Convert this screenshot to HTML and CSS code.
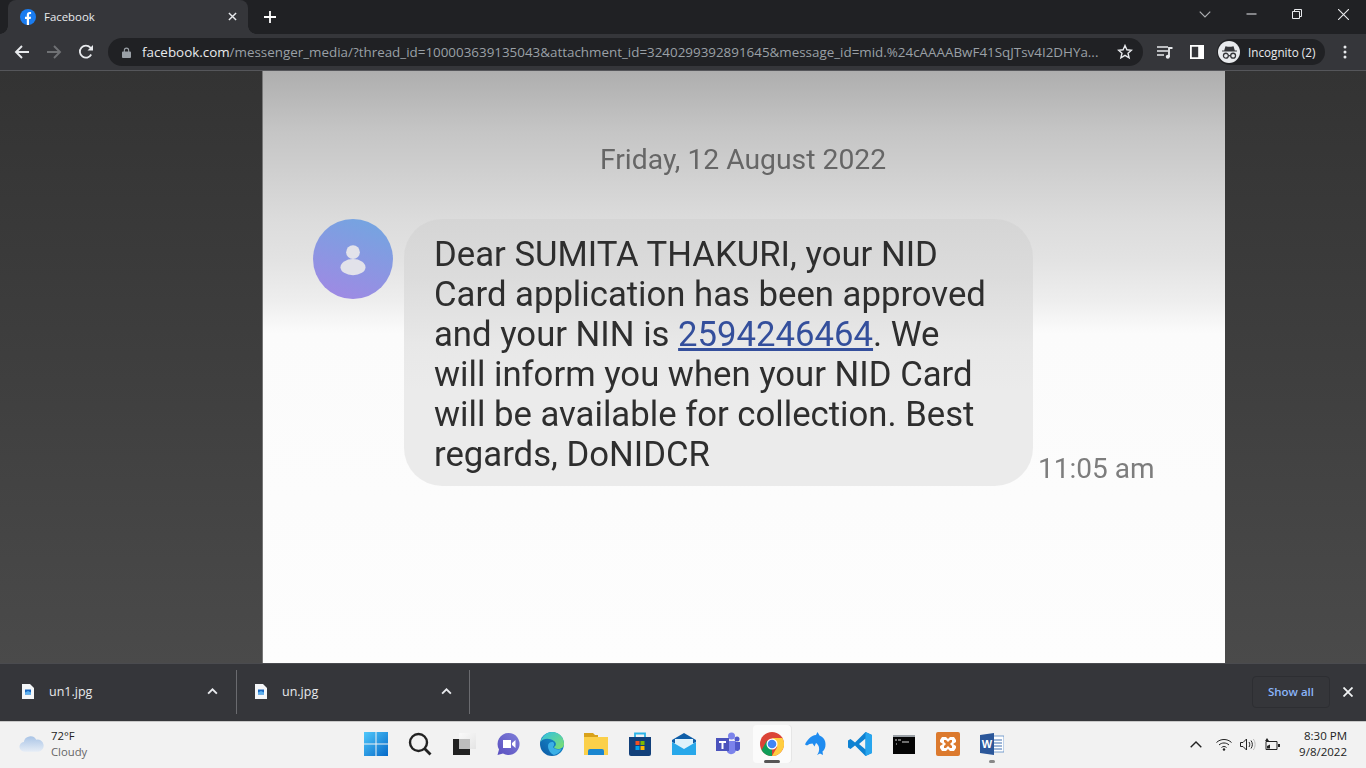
FILE: index.html
```html
<!DOCTYPE html>
<html lang="en">
<head>
<meta charset="utf-8">
<title>Facebook</title>
<link rel="stylesheet" href="styles.css">
</head>
<body>
<div class="browser">
  <header class="tabstrip">
    <div class="tab">
      <svg class="favicon" viewBox="0 0 16 16"><circle cx="8" cy="8" r="8" fill="#1a7cf0"/><path d="M6.8 16V10H5V7.7h1.8V6c0-1.9 1.1-2.9 2.8-2.9.8 0 1.500.1 1.500.1v1.900h-.9c-.9 0-1.200.6-1.200 1.100v1.500h2l-.3 2.300H9v6z" fill="#fff"/></svg>
      <span class="tab-title">Facebook</span>
      <svg class="tab-close" viewBox="0 0 10 10"><path d="M1 1l8 8M9 1l-8 8" stroke="#e8eaed" stroke-width="1.600" fill="none"/></svg>
    </div>
    <svg class="new-tab" viewBox="0 0 12 12"><path d="M6 0v12M0 6h12" stroke="#fff" stroke-width="1.800" fill="none"/></svg>
    <div class="win-controls">
      <svg class="win-chev" viewBox="0 0 10 6"><path d="M.5.5L5 5 9.500.5" stroke="#aeb0b3" fill="none"/></svg>
      <svg class="win-min" viewBox="0 0 10 10"><path d="M0 5h10" stroke="#e8eaed" fill="none"/></svg>
      <svg class="win-max" viewBox="0 0 10 10"><path d="M.5 2.500h7v7h-7zM2.500 2.500v-2h7v7h-2" stroke="#e8eaed" fill="none"/></svg>
      <svg class="win-close" viewBox="0 0 10 10"><path d="M0 0l10 10M10 0L0 10" stroke="#e8eaed" fill="none"/></svg>
    </div>
  </header>
  <nav class="toolbar">
    <svg class="nav-icon" viewBox="0 0 16 16"><path d="M15 8H2M8 2L2 8l6 6" stroke="#e8eaed" stroke-width="1.900" fill="none"/></svg>
    <svg class="nav-icon" viewBox="0 0 16 16"><path d="M1 8h13M8 2l6 6-6 6" stroke="#6f7174" stroke-width="1.900" fill="none"/></svg>
    <svg class="nav-icon" viewBox="0 0 16 16"><path d="M13.200 10.500A6 6 0 1 1 12.400 3.700L14 5.300" stroke="#e8eaed" stroke-width="1.800" fill="none"/><path d="M15 1v5.500H9.500z" fill="#e8eaed"/></svg>
    <div class="omnibox">
      <svg class="lock" viewBox="0 0 10 12"><path d="M2 5V3.500a3 3 0 0 1 6 0V5h1a1 1 0 0 1 1 1v5a1 1 0 0 1-1 1H1a1 1 0 0 1-1-1V6a1 1 0 0 1 1-1zm1.200 0h3.600V3.500a1.800 1.800 0 0 0-3.600 0z" fill="#9aa0a6"/></svg>
      <span class="url"><span class="host">facebook.com</span>/messenger_media/?thread_id=100003639135043&amp;attachment_id=3240299392891645&amp;message_id=mid.%24cAAAABwF41SqJTsv4I2DHYa...</span>
      <svg class="star" viewBox="0 0 16 16"><path d="M8 1.500l1.900 4.300 4.600.4-3.500 3 1.100 4.600L8 11.300l-4.100 2.500L5 9.200l-3.500-3 4.600-.4z" stroke="#e8eaed" stroke-width="1.400" fill="none"/></svg>
    </div>
    <svg class="media" viewBox="0 0 16 14"><path d="M0 2h11M0 6h11M0 10h7" stroke="#e8eaed" stroke-width="1.600" fill="none"/><path d="M12 12V3h3.500" stroke="#e8eaed" stroke-width="1.800" fill="none"/><circle cx="10.800" cy="11.800" r="2" fill="#e8eaed"/></svg>
    <svg class="sidepanel" viewBox="0 0 14 14"><path d="M0 0h14v14H0zM1.800 1.800v10.400h6.400V1.800z" fill="#fff" fill-rule="evenodd"/></svg>
    <div class="incognito">
      <span class="inc-badge"><svg viewBox="0 0 16 14"><path d="M4.200 1L3 5H1v1h14V5h-2l-1.200-4-2.300.7h-3z" fill="#35363a"/><circle cx="4.600" cy="10" r="2.300" stroke="#35363a" stroke-width="1.200" fill="none"/><circle cx="11.400" cy="10" r="2.300" stroke="#35363a" stroke-width="1.200" fill="none"/><path d="M6.900 10h2.200" stroke="#35363a" stroke-width="1.200"/></svg></span>
      <span class="inc-label">Incognito (2)</span>
    </div>
    <svg class="kebab" viewBox="0 0 4 14"><circle cx="2" cy="2" r="1.500" fill="#e8eaed"/><circle cx="2" cy="7" r="1.500" fill="#e8eaed"/><circle cx="2" cy="12" r="1.500" fill="#e8eaed"/></svg>
  </nav>
  <main class="viewer">
    <div class="photo">
      <p class="date">Friday, 12 August 2022</p>
      <div class="message">
        <div class="avatar"><svg viewBox="0 0 32 32"><circle cx="16" cy="10.500" r="5.500" fill="#e2e2ea"/><ellipse cx="16" cy="22.500" rx="10" ry="6.500" fill="#e2e2ea"/></svg></div>
        <div class="bubble">Dear SUMITA THAKURI, your NID<br>Card application has been approved<br>and your NIN is <a class="num">2594246464</a>. We<br>will inform you when your NID Card<br>will be available for collection. Best<br>regards, DoNIDCR</div>
        <span class="time">11:05 am</span>
      </div>
    </div>
  </main>
  <section class="downloads">
    <div class="dl-item">
      <svg class="dl-file" viewBox="0 0 12 15"><path d="M0 0h8l4 4v11H0z" fill="#f4f6f8"/><path d="M3 5.500h6v5H3z" fill="#1967c0"/><path d="M3 8.500l3-1.500 3 1.500v2H3z" fill="#5cb0ee"/></svg>
      <span class="dl-name">un1.jpg</span>
      <svg class="dl-chev" viewBox="0 0 10 6"><path d="M1 5l4-4 4 4" stroke="#e8eaed" stroke-width="1.700" fill="none"/></svg>
    </div>
    <div class="dl-item">
      <svg class="dl-file" viewBox="0 0 12 15"><path d="M0 0h8l4 4v11H0z" fill="#f4f6f8"/><path d="M3 5.500h6v5H3z" fill="#1967c0"/><path d="M3 8.500l3-1.500 3 1.500v2H3z" fill="#5cb0ee"/></svg>
      <span class="dl-name">un.jpg</span>
      <svg class="dl-chev" viewBox="0 0 10 6"><path d="M1 5l4-4 4 4" stroke="#e8eaed" stroke-width="1.700" fill="none"/></svg>
    </div>
    <div class="dl-actions">
      <button class="show-all">Show all</button>
      <svg class="dl-close" viewBox="0 0 10 10"><path d="M.5.500l9 9M9.500.500l-9 9" stroke="#f1f3f4" stroke-width="1.800" fill="none"/></svg>
    </div>
  </section>
</div>
<footer class="taskbar">
  <div class="weather">
    <svg class="cloud" viewBox="0 0 26 18"><defs><linearGradient id="cl" x1="0" y1="0" x2="0" y2="1"><stop offset="0" stop-color="#a9c4e6"/><stop offset="1" stop-color="#e6edf6"/></linearGradient></defs><path d="M6 17a5 5 0 0 1-1-10 7 7 0 0 1 13-2.500A6 6 0 0 1 20.500 17z" fill="url(#cl)"/></svg>
    <div class="weather-text"><span class="temp">72°F</span><span class="cond">Cloudy</span></div>
  </div>
  <div class="apps">
    <span class="app"><svg viewBox="0 0 24 24"><defs><linearGradient id="w" x1="0" y1="0" x2="1" y2="1"><stop offset="0" stop-color="#50c8fb"/><stop offset="1" stop-color="#0669c8"/></linearGradient></defs><path d="M0 0h11.500v11.500H0zM12.500 0H24v11.500H12.500zM0 12.500h11.500V24H0zM12.500 12.500H24V24H12.500z" fill="url(#w)"/></svg></span>
    <span class="app"><svg viewBox="0 0 24 24"><circle cx="10.500" cy="10.500" r="8.500" stroke="#222" stroke-width="2.400" fill="none"/><path d="M16.500 16.500l6 6" stroke="#222" stroke-width="2.800"/></svg></span>
    <span class="app"><svg viewBox="0 0 24 24"><defs><linearGradient id="tv" x1="0" y1="0" x2="1" y2="1"><stop offset="0" stop-color="#fafafa"/><stop offset="1" stop-color="#e4e4e4"/></linearGradient></defs><path d="M1 7h17v16H1z" fill="#222"/><path d="M7 1h17v16H7z" fill="url(#tv)"/><path d="M7 7h11v10H7z" fill="#bdbdbd"/></svg></span>
    <span class="app"><svg viewBox="0 0 24 24"><defs><linearGradient id="ch" x1="1" y1="0" x2="0" y2="1"><stop offset="0" stop-color="#7f7fd8"/><stop offset="1" stop-color="#5a4fc0"/></linearGradient></defs><path d="M12.500 1a11 11 0 1 1-5.500 20.500L1.500 23l1.500-5.500A11 11 0 0 1 12.500 1z" fill="url(#ch)"/><path d="M7 8h8v8H7zM16 11l3.500-3v8L16 13z" fill="#fff"/></svg></span>
    <span class="app"><svg viewBox="0 0 24 24"><defs><linearGradient id="e1" x1="0" y1="1" x2="1" y2="0"><stop offset="0" stop-color="#0c59a4"/><stop offset="1" stop-color="#1a9ad6"/></linearGradient><linearGradient id="e2" x1="0" y1="0" x2="1" y2="1"><stop offset="0" stop-color="#2fc0e8"/><stop offset="1" stop-color="#7fe06a"/></linearGradient></defs><circle cx="12" cy="12" r="12" fill="url(#e1)"/><path d="M.5 10C2 4 7 0 12 0c7 0 12 5 12 12 0 3-3 5-6 5-2 0-4-1-4-2 2-1 3-4 0-6C10 6 3 6 .5 10z" fill="url(#e2)"/><path d="M8 14c0-3 2.500-4.500 5-4 1.500 1 1.500 3.500 0 5 1 2 5 3 8.500 2-1.500 3-4.500 5.500-7.500 6-3-1-6-5-6-9z" fill="#3bb0e6"/></svg></span>
    <span class="app"><svg viewBox="0 0 24 24"><path d="M0 1h9l2 2h3v4H0z" fill="#d9a21b"/><path d="M0 5h24v18H0z" fill="#fbd04a"/><path d="M4 19a2 2 0 0 1 2-2h12a2 2 0 0 1 2 2v4H4z" fill="#1a86d0"/></svg></span>
    <span class="app"><svg viewBox="0 0 24 24"><path d="M7 5V1.500h10V5" stroke="#2ab4e8" stroke-width="1.800" fill="none"/><path d="M1 5h22v17a2 2 0 0 1-2 2H3a2 2 0 0 1-2-2z" fill="#12407a"/><path d="M7.500 9h4v4h-4z" fill="#f25022"/><path d="M12.500 9h4v4h-4z" fill="#7fba00"/><path d="M7.500 14h4v4h-4z" fill="#00a4ef"/><path d="M12.500 14h4v4h-4z" fill="#ffb900"/></svg></span>
    <span class="app"><svg viewBox="0 0 24 24"><path d="M0 8l12-7 12 7v2L12 16 0 10z" fill="#0f5ea8"/><path d="M3 7h18v6l-9 5-9-5z" fill="#dff2fb"/><path d="M0 10l12 7 12-7v13H0z" fill="#28a8ea"/></svg></span>
    <span class="app"><svg viewBox="0 0 24 24"><circle cx="15.500" cy="4" r="3.500" fill="#7b83eb"/><circle cx="21" cy="7" r="2.500" fill="#5059c9"/><path d="M11 9h9v9a5 5 0 0 1-9 2z" fill="#7b83eb"/><path d="M19 10h5v7a3 3 0 0 1-5 1z" fill="#5059c9"/><path d="M0 6h13v13H0z" fill="#4b53bc"/><path d="M3 9h7v2H7.500v6h-2v-6H3z" fill="#fff"/></svg></span>
    <span class="app app-active"><svg viewBox="0 0 24 24"><circle cx="12" cy="12" r="12" fill="#db4437"/><path d="M12 24a12 12 0 0 1-10.400-6L7 8.500 12 17z" fill="#0f9d58"/><path d="M12 6h10.400a12 12 0 0 1-10.400 18l5.200-9z" fill="#ffcd40"/><circle cx="12" cy="12" r="5.500" fill="#fff"/><circle cx="12" cy="12" r="4.300" fill="#4285f4"/></svg></span>
    <span class="app"><svg viewBox="0 0 24 24"><path d="M1 12.500C3 8 7 3.500 12 3l1.500-3 2 3.500c4 1.500 6 5 6 9 0 3-1 5.500-3 7l.5 3.500-3-1.500-3 1.500c1.500-2 2.500-4.500 2-7.500-.3-2-1.500-3.500-3-4.500l-1.500 3.500-2-3-3 .5-2.500 1.500z" fill="#1f8cf0"/></svg></span>
    <span class="app"><svg viewBox="0 0 24 24"><path d="M17.500 0L24 3v18l-6.500 3L7 13.500l-4.500 3.500L0 15.500V8.500L2.500 7 7 10.500zM17.500 6.500L11 12l6.500 5.500z" fill="#0f82d2" fill-rule="evenodd"/><path d="M17.500 0L24 3v18l-6.500 3z" fill="#27a5ee"/></svg></span>
    <span class="app"><svg viewBox="0 0 24 24"><path d="M1 3h22v19H1z" fill="#050505"/><path d="M1 3h22v2H1z" fill="#9aa0a6"/><path d="M3 8h2M6 8h3M4 12h1M10 10h7" stroke="#d8d8d8" stroke-width="1.100" fill="none"/></svg></span>
    <span class="app"><svg viewBox="0 0 24 24"><rect width="24" height="24" rx="2" fill="#dc7a2e"/><path d="M6 5h4l2 2 2-2h4l2 3v2l-3 2 3 2v2l-2 3h-4l-2-2-2 2H6l-2-3v-2l3-2-3-2V8zM8 8v2l2 2-2 2v2h2l2-2 2 2h2v-2l-2-2 2-2V8h-2l-2 2-2-2z" fill="#fff" fill-rule="evenodd"/></svg></span>
    <span class="app app-open"><svg viewBox="0 0 24 24"><path d="M10 4h14v16H10z" fill="#fff" stroke="#5a8ac4" stroke-width=".8"/><path d="M14 8h8M14 11h8M14 14h8M14 17h8" stroke="#3f6fb0" stroke-width="1"/><path d="M0 3l14-2v22L0 21z" fill="#2b579a"/><text class="word-w" x="7" y="15.500">W</text></svg></span>
  </div>
  <div class="tray">
    <svg class="tray-chev" viewBox="0 0 12 7"><path d="M.7 6.300L6 1l5.300 5.300" stroke="#222" stroke-width="1.400" fill="none"/></svg>
    <svg class="tray-ic wifi" viewBox="0 0 16 13"><path d="M.5 4.500c4-4 11-4 15 0M3 7c2.700-2.700 7.300-2.700 10 0M5.500 9.500c1.300-1.300 3.700-1.300 5 0" stroke="#222" fill="none"/><circle cx="8" cy="11.500" r="1.200" fill="#222"/></svg>
    <svg class="tray-ic vol" viewBox="0 0 16 13"><path d="M.5 4.500h2.500L6.500 1v11L3 8.500H.5zM9 4c1 1.500 1 3.500 0 5M11 2.500c1.800 2.500 1.800 5.500 0 8" stroke="#222" fill="none"/><path d="M13.300 1c2.400 3.300 2.400 7.700 0 11" stroke="#bbb" fill="none"/></svg>
    <svg class="tray-ic batt" viewBox="0 0 17 13"><path d="M2 3.500h11v8H2z" stroke="#222" fill="none"/><path d="M14 6h2v3h-2z" fill="#222"/><path d="M3 10.500V8l3-1.500v4z" fill="#222"/><path d="M3 0L1 3h4z" fill="#222"/></svg>
    <div class="clock"><span>8:30 PM</span><span>9/8/2022</span></div>
  </div>
</footer>
</body>
</html>
```

FILE: styles.css
```css
* { box-sizing: border-box; }
html, body { margin: 0; height: 100%; overflow: hidden; }
body { display: flex; flex-direction: column; width: 1366px; height: 768px; font-family: "Open Sans", "Noto Sans", sans-serif; background: #f2f2f2; }
svg { display: block; flex: none; }

.browser { flex: 1; display: flex; flex-direction: column; min-height: 0; }

.tabstrip { height: 34px; background: #202124; display: flex; align-items: flex-end; padding-left: 8px; flex: none; }
.tab { position: relative; width: 240px; height: 34px; background: #35363a; border-radius: 8px 8px 0 0; display: flex; align-items: center; padding: 0 12px 1px; }
.tab::before, .tab::after { content: ""; position: absolute; bottom: 0; width: 8px; height: 8px; }
.tab::before { left: -8px; background: radial-gradient(circle at 0 0, #202124 7.500px, #35363a 8px); }
.tab::after { right: -8px; background: radial-gradient(circle at 100% 0, #202124 7.500px, #35363a 8px); }
.favicon { width: 16px; height: 16px; }
.tab-title { margin-left: 8px; flex: 1; color: #e8eaed; font: 11.400px "Open Sans", sans-serif; }
.tab-close { width: 9px; height: 9px; margin-right: -1px; }
.new-tab { width: 12px; height: 12px; margin: 0 0 11px 16px; }
.win-controls { margin-left: auto; align-self: flex-start; display: flex; align-items: center; height: 28px; }
.win-chev { width: 12px; height: 7px; margin-right: 35px; }
.win-min { width: 11px; height: 10px; margin-right: 35px; }
.win-max { width: 10px; height: 10px; margin-right: 36px; }
.win-close { width: 11px; height: 11px; margin-right: 17px; }

.toolbar { height: 37px; background: #35363a; border-bottom: 1px solid #55565a; display: flex; align-items: center; padding-left: 14px; flex: none; }
.nav-icon { width: 16px; height: 16px; margin-right: 16px; }
.omnibox { margin-left: -2px; width: 1035px; height: 28px; background: #202124; border-radius: 14px; display: flex; align-items: center; padding: 0 10px 0 14px; }
.lock { width: 9px; height: 11px; }
.url { margin-left: 11px; flex: 1; min-width: 0; white-space: nowrap; overflow: hidden; color: #9aa0a6; font: 13.400px "Open Sans", sans-serif; }
.host { color: #e8eaed; }
.star { width: 16px; height: 16px; }
.media { width: 16px; height: 14px; margin-left: 14px; }
.sidepanel { width: 14px; height: 14px; margin-left: 17px; }
.incognito { margin-left: 13px; height: 26px; width: 108px; border-radius: 13px; background: #202124; display: flex; align-items: center; padding-left: 1px; }
.inc-badge { width: 22px; height: 22px; border-radius: 50%; background: #e8eaed; display: flex; align-items: center; justify-content: center; }
.inc-badge svg { width: 17px; height: 15px; }
.inc-label { margin-left: 8px; color: #e8eaed; font: 11.700px "Open Sans", sans-serif; }
.kebab { width: 4px; height: 14px; margin-left: 18px; }

.viewer { flex: 1; min-height: 0; background: linear-gradient(#333, #4a4a4a); display: flex; padding-left: 263px; overflow: hidden; }
.photo { width: 962px; background: linear-gradient(#aeaeae 0, #c5c5c5 60px, #dcdcdc 150px, #e3e3e3 190px, #eeeeee 230px, #fbfbfb 262px, #fdfdfd 100%); box-shadow: -1px 0 0 #777; padding: 71px 0 0 50px; }
.date { margin: 0 0 41px 287px; height: 36px; color: #666; font: 28.300px/36px Roboto, sans-serif; filter: blur(.4px); }
.message { display: flex; align-items: flex-end; }
.avatar { width: 80px; height: 80px; border-radius: 50%; align-self: flex-start; background: linear-gradient(20deg, #a387e4, #70a7e0); display: flex; align-items: center; justify-content: center; filter: blur(.5px); }
.avatar svg { width: 40px; height: 40px; }
.bubble { margin-left: 11px; width: 629px; height: 267px; border-radius: 38px; background: linear-gradient(#d5d5d5 0, #dcdcdc 60px, #e8e8e8 125px, #ebebeb 170px); padding: 15px 30px; color: #2e2e2e; font: 34.700px/40px Roboto, sans-serif; white-space: nowrap; filter: blur(.35px); }
.num { color: #344f9c; text-decoration: underline; }
.time { margin: 0 0 -1px 5px; color: #7d7d7d; font: 28px/36px Roboto, sans-serif; filter: blur(.4px); }

.downloads { height: 58px; background: #35363a; border-top: 1px solid #4a4b4f; padding-bottom: 2px; display: flex; align-items: center; flex: none; }
.dl-item { width: 237px; height: 44px; border-right: 1px solid #6a6b6f; display: flex; align-items: center; padding: 0 18px 0 22px; }
.dl-item + .dl-item { width: 233px; padding-left: 18px; padding-right: 17.500px; }
.dl-file { width: 12px; height: 15px; }
.dl-name { margin-left: 15px; flex: 1; color: #e8eaed; font: 12.500px "Open Sans", sans-serif; }
.dl-chev { width: 11px; height: 7px; }
.dl-actions { margin-left: auto; display: flex; align-items: center; }
.show-all { width: 78px; height: 32px; border: 1px solid #2d2e32; border-radius: 4px; background: #35363a; color: #8ab4f8; font: 600 11.500px "Open Sans", sans-serif; padding: 0; }
.dl-close { width: 10px; height: 10px; margin: 0 13px; }

.taskbar { height: 47px; flex: none; background: #f2f2f2; border-top: 1px solid #c9c9c9; padding-bottom: 2px; display: flex; align-items: center; }
.weather { display: flex; align-items: center; width: 354px; padding-left: 19px; }
.cloud { width: 25px; height: 18px; }
.weather-text { margin-left: 7px; display: flex; flex-direction: column; font: 11.300px/16px "Open Sans", sans-serif; color: #222; }
.cond { color: #666; }
.apps { display: flex; align-items: center; }
.app { width: 44px; height: 44px; display: flex; align-items: center; justify-content: center; position: relative; }
.app svg { width: 24px; height: 24px; }
.app-active::before { content: ""; position: absolute; left: 3px; top: 3px; width: 38px; height: 38px; border-radius: 4px; background: #fbfbfb; box-shadow: 1px 0 0 #e6e6e6; }
.app-active svg { position: relative; }
.app-active::after { content: ""; position: absolute; left: 14px; bottom: 3px; width: 16px; height: 3px; border-radius: 2px; background: #555; }
.app-open::after { content: ""; position: absolute; left: 19px; bottom: 3px; width: 6px; height: 3px; border-radius: 2px; background: #888; }
.word-w { fill: #fff; font: 700 11px "Liberation Sans", sans-serif; text-anchor: middle; }
.tray { margin-left: auto; display: flex; align-items: center; padding-right: 19px; }
.tray-chev { width: 12px; height: 7px; margin-right: 14px; }
.tray-ic { width: 16px; height: 13px; margin-right: 8px; }
.batt { width: 17px; margin-right: 18px; }
.clock { display: flex; flex-direction: column; align-items: flex-end; font: 11.500px/16px "Open Sans", sans-serif; color: #222; }
```
